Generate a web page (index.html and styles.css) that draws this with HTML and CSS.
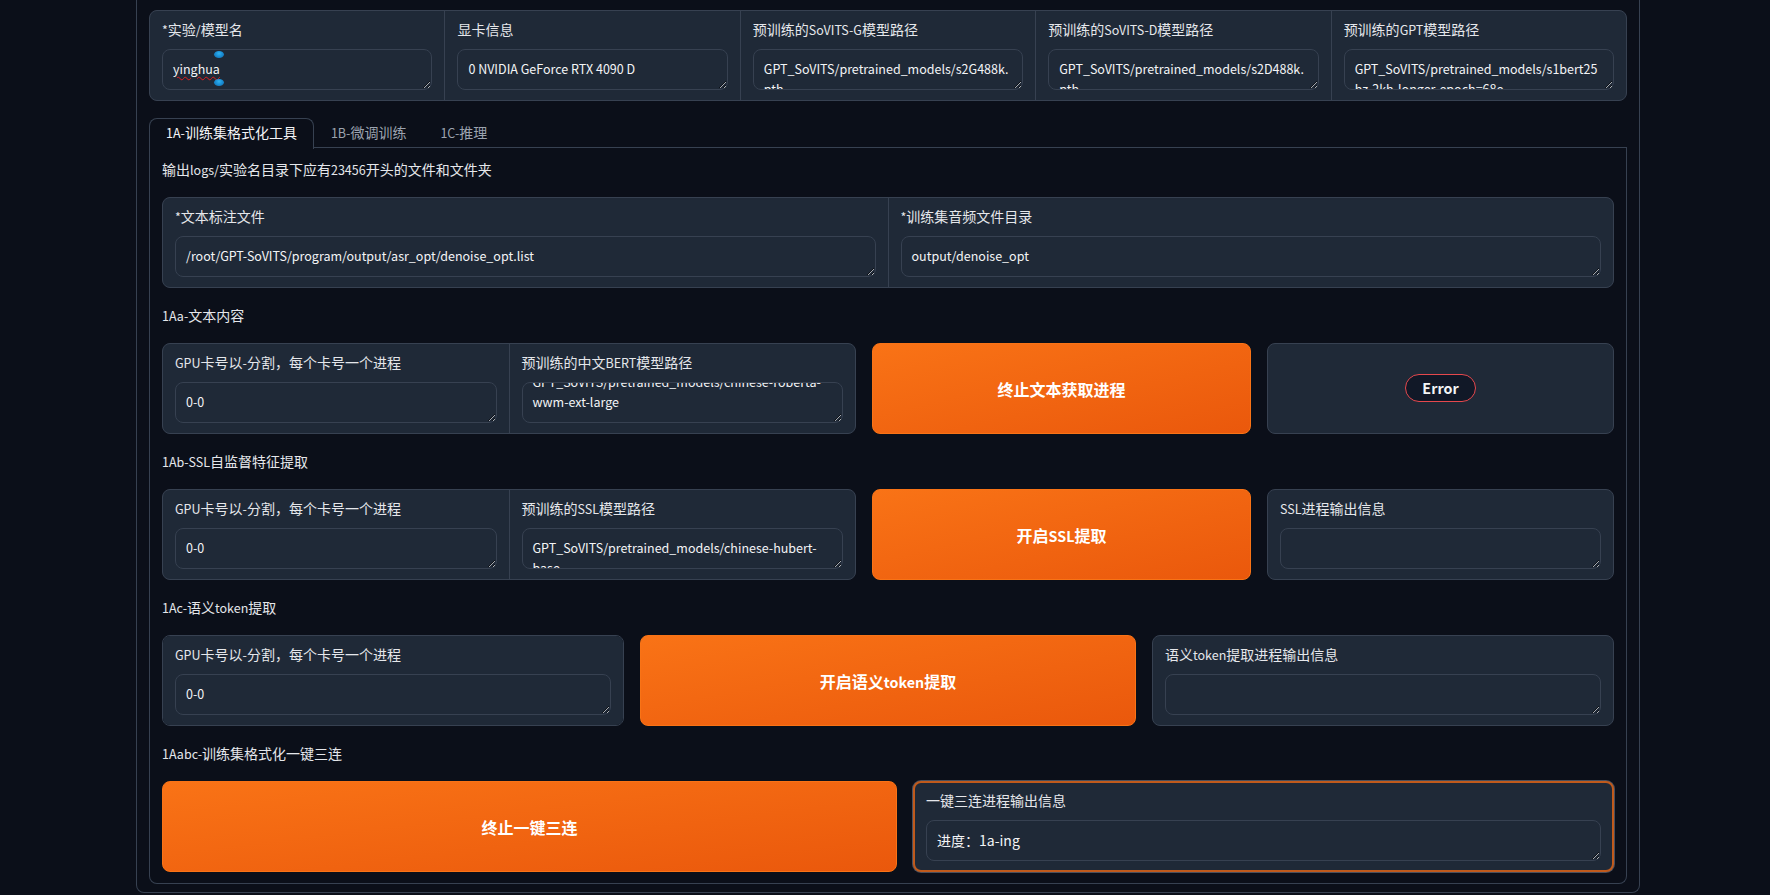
FILE: index.html
```html
<!DOCTYPE html>
<html lang="zh-CN">
<head>
<meta charset="utf-8">
<title>GPT-SoVITS WebUI</title>
<link rel="stylesheet" href="styles.css">
</head>
<body>
<div class="app">
  <div class="outer">
    <div class="form">
      <div class="field">
        <span class="label"><span class="lat">*</span>实验<span class="lat">/</span>模型名</span>
        <div class="ta-wrap">
          <textarea class="ta ta-spell" rows="1" spellcheck="false">yinghua</textarea>
          <span class="handle handle-top"></span>
          <span class="handle handle-bottom"></span>
        </div>
      </div>
      <div class="field">
        <span class="label">显卡信息</span>
        <textarea class="ta" rows="1" spellcheck="false">0 NVIDIA GeForce RTX 4090 D</textarea>
      </div>
      <div class="field">
        <span class="label">预训练的<span class="lat">SoVITS-G</span>模型路径</span>
        <textarea class="ta" rows="1" spellcheck="false">GPT_SoVITS/pretrained_models/s2G488k.pth</textarea>
      </div>
      <div class="field">
        <span class="label">预训练的<span class="lat">SoVITS-D</span>模型路径</span>
        <textarea class="ta" rows="1" spellcheck="false">GPT_SoVITS/pretrained_models/s2D488k.pth</textarea>
      </div>
      <div class="field">
        <span class="label">预训练的<span class="lat">GPT</span>模型路径</span>
        <textarea class="ta" rows="1" spellcheck="false">GPT_SoVITS/pretrained_models/s1bert25hz-2kh-longer-epoch=68e-step=50232.ckpt</textarea>
      </div>
    </div>

    <div class="tabs">
      <div class="tab-nav">
        <button class="tab selected"><span class="lat">1A-</span>训练集格式化工具</button>
        <button class="tab"><span class="lat">1B-</span>微调训练</button>
        <button class="tab"><span class="lat">1C-</span>推理</button>
      </div>
      <div class="tab-panel">
        <div class="md">输出<span class="lat">logs/</span>实验名目录下应有<span class="lat">23456</span>开头的文件和文件夹</div>

        <div class="form">
          <div class="field">
            <span class="label"><span class="lat">*</span>文本标注文件</span>
            <textarea class="ta" rows="1" spellcheck="false">/root/GPT-SoVITS/program/output/asr_opt/denoise_opt.list</textarea>
          </div>
          <div class="field">
            <span class="label"><span class="lat">*</span>训练集音频文件目录</span>
            <textarea class="ta" rows="1" spellcheck="false">output/denoise_opt</textarea>
          </div>
        </div>

        <div class="md"><span class="lat">1Aa-</span>文本内容</div>
        <div class="row">
          <div class="form w-694">
            <div class="field">
              <span class="label"><span class="lat">GPU</span>卡号以<span class="lat">-</span>分割，每个卡号一个进程</span>
              <textarea class="ta" rows="1" spellcheck="false">0-0</textarea>
            </div>
            <div class="field">
              <span class="label">预训练的中文<span class="lat">BERT</span>模型路径</span>
              <textarea class="ta scroll-end" rows="1" spellcheck="false">GPT_SoVITS/pretrained_models/chinese-roberta-wwm-ext-large</textarea>
            </div>
          </div>
          <button class="btn w-379">终止文本获取进程</button>
          <div class="block status w-347">
            <span class="pill">Error</span>
          </div>
        </div>

        <div class="md"><span class="lat">1Ab-SSL</span>自监督特征提取</div>
        <div class="row">
          <div class="form w-694">
            <div class="field">
              <span class="label"><span class="lat">GPU</span>卡号以<span class="lat">-</span>分割，每个卡号一个进程</span>
              <textarea class="ta" rows="1" spellcheck="false">0-0</textarea>
            </div>
            <div class="field">
              <span class="label">预训练的<span class="lat">SSL</span>模型路径</span>
              <textarea class="ta" rows="1" spellcheck="false">GPT_SoVITS/pretrained_models/chinese-hubert-base</textarea>
            </div>
          </div>
          <button class="btn w-379">开启<span class="lat">SSL</span>提取</button>
          <div class="block w-347">
            <span class="label"><span class="lat">SSL</span>进程输出信息</span>
            <textarea class="ta" rows="1" spellcheck="false"></textarea>
          </div>
        </div>

        <div class="md"><span class="lat">1Ac-</span>语义<span class="lat">token</span>提取</div>
        <div class="row">
          <div class="form w-462">
            <div class="field">
              <span class="label"><span class="lat">GPU</span>卡号以<span class="lat">-</span>分割，每个卡号一个进程</span>
              <textarea class="ta" rows="1" spellcheck="false">0-0</textarea>
            </div>
          </div>
          <button class="btn w-496">开启语义<span class="lat">token</span>提取</button>
          <div class="block w-462">
            <span class="label">语义<span class="lat">token</span>提取进程输出信息</span>
            <textarea class="ta" rows="1" spellcheck="false"></textarea>
          </div>
        </div>

        <div class="md"><span class="lat">1Aabc-</span>训练集格式化一键三连</div>
        <div class="row">
          <button class="btn w-735">终止一键三连</button>
          <div class="block generating w-701">
            <span class="label">一键三连进程输出信息</span>
            <textarea class="ta ta-cjk" rows="1" spellcheck="false">进度：1a-ing</textarea>
          </div>
        </div>
      </div>
    </div>
  </div>
</div>
<script src="script.js"></script>
</body>
</html>
```

FILE: styles.css
```css
* {
  box-sizing: border-box;
}

html {
  color-scheme: dark;
}

body {
  margin: 0;
  background: #0b0f19;
  color: #e5e7eb;
  font-family: "Noto Sans CJK SC", "Liberation Sans", sans-serif;
  font-size: 14px;
}

.lat {
  font-size: 0.893em;
  line-height: 1;
}

.app {
  padding-left: 136px;
}

.outer {
  width: 1504px;
  border: 1px solid #374151;
  border-top: 0;
  border-radius: 0 0 8px 8px;
  padding: 10px 12px 8px;
  display: flex;
  flex-direction: column;
  gap: 17px;
}

.form {
  display: flex;
  gap: 1px;
  background: #374151;
  border: 1px solid #374151;
  border-radius: 8px;
  overflow: hidden;
}

.field {
  flex: 1 1 0;
  min-width: 0;
  background: #1f2937;
  padding: 8px 12px 10px;
  display: flex;
  flex-direction: column;
}

.block {
  background: #1f2937;
  border: 1px solid #374151;
  border-radius: 8px;
  padding: 8px 12px 10px;
  display: flex;
  flex-direction: column;
}

.label {
  display: block;
  height: 20px;
  line-height: 20px;
  margin-bottom: 10px;
  color: #e5e7eb;
  font-size: 14px;
  white-space: nowrap;
}

.ta-wrap {
  position: relative;
}

.ta {
  display: block;
  width: 100%;
  height: 41px;
  margin: 0;
  padding: 9px 10px 10px;
  background: #1f2937;
  border: 1px solid #374151;
  border-radius: 8px;
  color: #f3f4f6;
  font-family: inherit;
  font-size: 12.5px;
  line-height: 20px;
  resize: vertical;
  overflow: hidden;
  outline: none;
}

.ta-cjk {
  font-size: 14px;
}

.ta-spell {
  text-decoration: underline wavy #e11d1d;
  text-decoration-thickness: 1px;
  text-underline-offset: 2px;
}

.handle {
  position: absolute;
  left: 52px;
  width: 10px;
  height: 7px;
  border-radius: 50%;
  background: radial-gradient(ellipse at 50% 35%, #2fb3f0 0%, #1b8fd6 45%, #0f6aa8 100%);
}

.handle-top {
  top: 2px;
}

.handle-bottom {
  top: 30px;
}

/* tabs */
.tab-nav {
  display: flex;
  height: 30px;
  border-bottom: 1px solid #374151;
}

.tab {
  height: 30px;
  padding: 0 16px 4px;
  margin: 0 0 -1px;
  border: 1px solid transparent;
  border-bottom: 0;
  border-radius: 8px 8px 0 0;
  background: transparent;
  color: #9ca3af;
  font-family: inherit;
  font-size: 14px;
  line-height: 24px;
}

.tab.selected {
  height: 31px;
  border-color: #374151;
  background: #0b0f19;
  color: #f3f4f6;
}

.tab-panel {
  border: 1px solid #374151;
  border-top: 0;
  border-radius: 0 0 8px 8px;
  padding: 10px 12px 11px;
  display: flex;
  flex-direction: column;
  gap: 16px;
}

.md {
  height: 23px;
  line-height: 22px;
  font-size: 14px;
  color: #e5e7eb;
}

.row {
  display: flex;
  gap: 16px;
  align-items: stretch;
}

.row > * {
  min-width: 0;
}

.btn {
  padding: 0;
  border: 1px solid #f97316;
  border-radius: 8px;
  background: linear-gradient(to bottom right, #f97316, #ea580c);
  color: #ffffff;
  font-family: inherit;
  font-size: 16px;
  font-weight: 600;
}

.status {
  align-items: center;
  justify-content: center;
}

.pill {
  display: inline-block;
  height: 28px;
  padding: 0 16px;
  border: 1px solid #e5484d;
  border-radius: 999px;
  background: #111827;
  color: #f3f4f6;
  font-size: 14.3px;
  font-weight: 600;
  line-height: 26px;
}

.generating {
  border: 2px solid #c05a1c;
  padding: 7px 11px 9px;
  box-shadow: 0 0 0 1px #4a4f5c;
}

.w-694 { flex: 1 1 694px; }
.w-379 { flex: 1 1 379px; }
.w-347 { flex: 1 1 347px; }
.w-462 { flex: 1 1 462px; }
.w-496 { flex: 1 1 496px; }
.w-735 { flex: 1 1 735px; }
.w-701 { flex: 1 1 701px; }
```

FILE: script.js
```js
document.querySelectorAll('.scroll-end').forEach(function (el) {
  el.scrollTop = el.scrollHeight;
});
```
